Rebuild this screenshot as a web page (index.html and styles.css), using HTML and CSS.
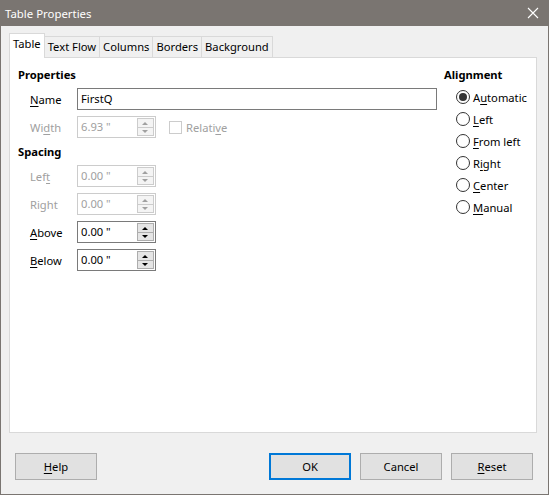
FILE: index.html
```html
<!DOCTYPE html>
<html lang="en">
<head>
    <meta charset="UTF-8">
    <title>Table Properties</title>
    <link rel="stylesheet" href="styles.css">
</head>
<body>
    <div class="window">
        <div class="titlebar">
            <span class="title">Table Properties</span>
            <svg class="close" width="12" height="12" viewBox="0 0 12 12">
                <path d="M1 1 L11 11 M11 1 L1 11" stroke="#ffffff" stroke-width="1.1" fill="none"/>
            </svg>
        </div>

        <div class="tabs">
            <div class="tab active">Table</div>
            <div class="tab">Text Flow</div>
            <div class="tab">Columns</div>
            <div class="tab">Borders</div>
            <div class="tab">Background</div>
        </div>

        <div class="panel">
            <div class="col-left">
                <div class="heading">Properties</div>

                <div class="row">
                    <span class="lbl"><u>N</u>ame</span>
                    <div class="field name-field">FirstQ</div>
                </div>

                <div class="row disabled">
                    <span class="lbl">Wi<u>d</u>th</span>
                    <div class="field spin">
                        <span class="value">6.93 "</span>
                        <span class="spinner"><span class="up"></span><span class="down"></span></span>
                    </div>
                    <span class="checkbox"></span>
                    <span class="check-label">Relati<u>v</u>e</span>
                </div>

                <div class="heading spacing">Spacing</div>

                <div class="row disabled">
                    <span class="lbl">Lef<u>t</u></span>
                    <div class="field spin">
                        <span class="value">0.00 "</span>
                        <span class="spinner"><span class="up"></span><span class="down"></span></span>
                    </div>
                </div>

                <div class="row disabled">
                    <span class="lbl">Right</span>
                    <div class="field spin">
                        <span class="value">0.00 "</span>
                        <span class="spinner"><span class="up"></span><span class="down"></span></span>
                    </div>
                </div>

                <div class="row">
                    <span class="lbl"><u>A</u>bove</span>
                    <div class="field spin">
                        <span class="value">0.00 "</span>
                        <span class="spinner"><span class="up"></span><span class="down"></span></span>
                    </div>
                </div>

                <div class="row">
                    <span class="lbl"><u>B</u>elow</span>
                    <div class="field spin">
                        <span class="value">0.00 "</span>
                        <span class="spinner"><span class="up"></span><span class="down"></span></span>
                    </div>
                </div>
            </div>

            <div class="col-right">
                <div class="heading">Alignment</div>
                <div class="radio checked"><span class="circle"></span><span>A<u>u</u>tomatic</span></div>
                <div class="radio"><span class="circle"></span><span><u>L</u>eft</span></div>
                <div class="radio"><span class="circle"></span><span><u>F</u>rom left</span></div>
                <div class="radio"><span class="circle"></span><span>R<u>i</u>ght</span></div>
                <div class="radio"><span class="circle"></span><span><u>C</u>enter</span></div>
                <div class="radio"><span class="circle"></span><span><u>M</u>anual</span></div>
            </div>
        </div>

        <div class="buttons">
            <button class="btn"><u>H</u>elp</button>
            <div class="spacer"></div>
            <button class="btn btn-default">OK</button>
            <button class="btn">Cancel</button>
            <button class="btn"><u>R</u>eset</button>
        </div>
    </div>
</body>
</html>
```

FILE: styles.css
```css
* {
    margin: 0;
    padding: 0;
    box-sizing: border-box;
}

body {
    font-family: 'Segoe UI', 'Noto Sans', sans-serif;
    font-size: 11.2px;
    color: #000000;
    background: #f0f0f0;
}

u {
    text-decoration: underline;
    text-underline-offset: 2px;
}

.window {
    width: 549px;
    height: 495px;
    background: #f0f0f0;
    border: 1px solid #7a7571;
    border-top: none;
    display: flex;
    flex-direction: column;
}

.titlebar {
    height: 26px;
    background: #7a7571;
    display: flex;
    align-items: center;
    justify-content: space-between;
    padding: 0 9px 0 4px;
    flex-shrink: 0;
}

.title {
    color: #ffffff;
    font-size: 11.4px;
}

.close {
    display: block;
}

/* Tabs */

.tabs {
    display: flex;
    align-items: flex-end;
    margin: 7px 0 0 8px;
    height: 24px;
}

.tab {
    height: 21px;
    line-height: 19px;
    padding: 0 3px;
    border: 1px solid #d9d9d9;
    border-bottom: none;
    border-left: none;
    background: #f0f0f0;
}

.tab.active {
    height: 25px;
    line-height: 20px;
    margin-bottom: -1px;
    border-left: 1px solid #d9d9d9;
    background: #ffffff;
    position: relative;
    z-index: 1;
}

.panel {
    margin-left: 8px;
    width: 528px;
    height: 376px;
    background: #ffffff;
    border: 1px solid #d9d9d9;
    padding: 9px 0 0 8px;
    display: flex;
    gap: 7px;
}

.col-left {
    width: 419px;
}

.heading {
    font-weight: bold;
    height: 16px;
    line-height: 16px;
}

.heading.spacing {
    margin-top: 6px;
}

.row {
    display: flex;
    align-items: center;
    height: 22px;
    margin-top: 6px;
}

.heading + .row {
    margin-top: 5px;
}

.lbl {
    width: 59px;
    padding-left: 12px;
    flex-shrink: 0;
}

.field {
    height: 22px;
    border: 1px solid #7a7a7a;
    background: #ffffff;
    padding-left: 3px;
    line-height: 20px;
}

.name-field {
    width: 360px;
}

.spin {
    width: 79px;
    display: flex;
    justify-content: space-between;
    align-items: center;
}

.spinner {
    width: 17px;
    height: 18px;
    margin-right: 1px;
    display: flex;
    flex-direction: column;
}

.spinner span {
    flex: 1;
    background: #e5e5e5;
    border: 1px solid #adadad;
    position: relative;
}

.spinner .down {
    border-top: none;
}

.spinner span::after {
    content: '';
    position: absolute;
    left: 4px;
    top: 3px;
    border-left: 3.5px solid transparent;
    border-right: 3.5px solid transparent;
}

.spinner .up::after {
    border-bottom: 3.5px solid #000000;
}

.spinner .down::after {
    top: 2px;
    border-top: 3.5px solid #000000;
}

.disabled {
    color: #a0a0a0;
}

.disabled .field {
    border-color: #cccccc;
}

.disabled .spinner span {
    background: #f4f4f4;
    border-color: #cccccc;
}

.disabled .spinner .up::after {
    border-bottom-color: #a0a0a0;
}

.disabled .spinner .down::after {
    border-top-color: #a0a0a0;
}

.checkbox {
    width: 13px;
    height: 13px;
    border: 1px solid #cccccc;
    background: #ffffff;
    margin-left: 13px;
}

.check-label {
    margin-left: 4px;
}

/* Alignment radios */

.col-right {
    flex: 1;
}

.col-right .heading {
    margin-bottom: 3px;
}

.radio {
    display: flex;
    align-items: center;
    height: 22px;
    padding-left: 12px;
}

.circle {
    width: 14px;
    height: 14px;
    border: 1px solid #333333;
    border-radius: 50%;
    background: #ffffff;
    margin-right: 3px;
    display: flex;
    align-items: center;
    justify-content: center;
}

.radio.checked .circle::after {
    content: '';
    width: 8px;
    height: 8px;
    border-radius: 50%;
    background: #333333;
}

/* Buttons */

.buttons {
    display: flex;
    gap: 9px;
    margin-top: 20px;
    padding: 0 15px 0 14px;
}

.spacer {
    flex: 1;
}

.btn {
    width: 82px;
    height: 27px;
    background: #e1e1e1;
    border: 1px solid #adadad;
    font-family: inherit;
    font-size: 11.2px;
    color: #000000;
}

.btn-default {
    border: 2px solid #0078d7;
}
```
